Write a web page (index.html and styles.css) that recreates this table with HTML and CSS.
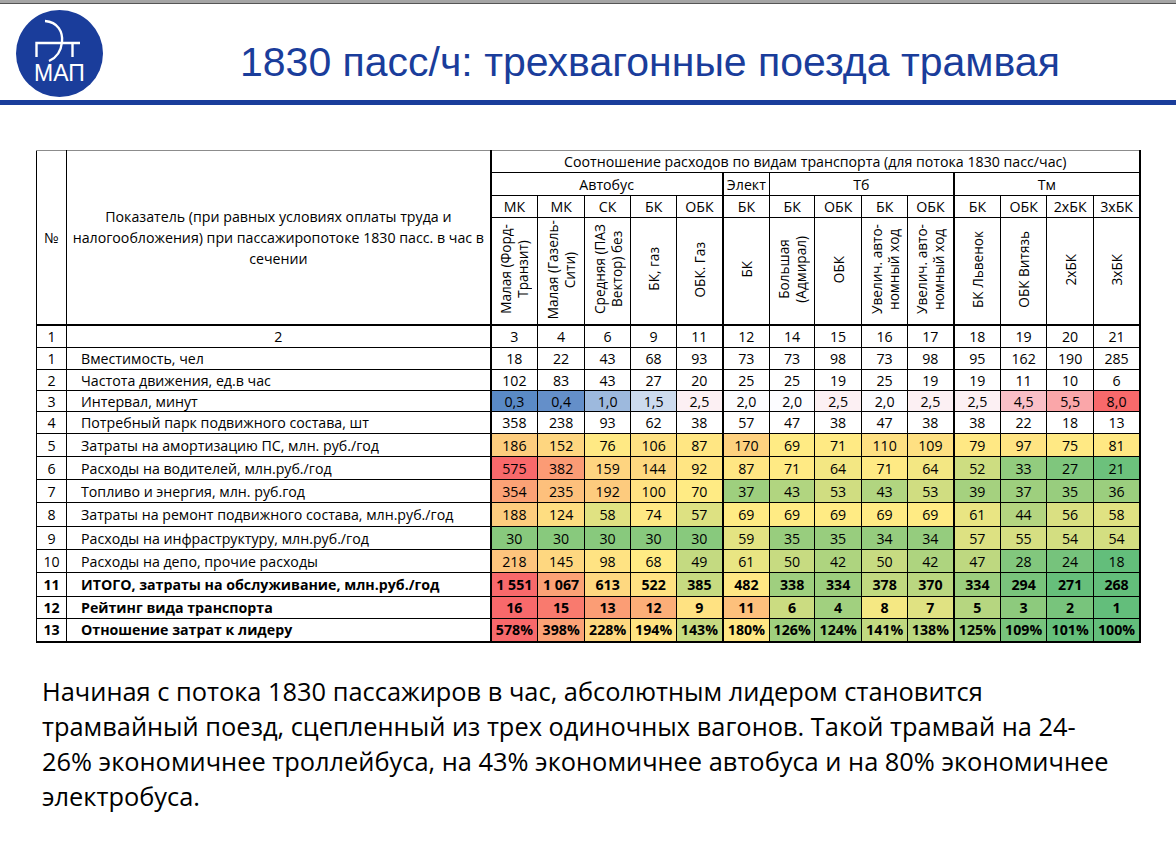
FILE: index.html
```html
<!DOCTYPE html>
<html lang="ru">
<head>
<meta charset="utf-8">
<title>1830 пасс/ч</title>
<link rel="stylesheet" href="styles.css">
</head>
<body>
<div class="frame-top"></div>
<header class="header">
  <svg class="logo" width="87" height="87" viewBox="0 0 87 87">
    <circle cx="43.5" cy="43.5" r="43.5" fill="#1a3d9b"/>
    <g fill="none" stroke="#fff" stroke-width="2.4">
      <path d="M29 11 C42 12 47 22 46 32 C45 42 40 48 33 51"/>
      <path d="M20.5 47 V33 H64"/>
      <path d="M56.5 33 V47"/>
    </g>
    <text x="43.5" y="71" text-anchor="middle" class="logo-text">МАП</text>
  </svg>
  <h1 class="title">1830 пасс/ч: трехвагонные поезда трамвая</h1>
</header>
<div class="rule"></div>

<table class="grid">
  <colgroup>
    <col class="c-no"><col class="c-name">
    <col class="c47"><col class="c47"><col class="c46"><col class="c46"><col class="c46">
    <col class="c47"><col class="c45"><col class="c47"><col class="c46"><col class="c46">
    <col class="c47"><col class="c46"><col class="c47"><col class="c46">
  </colgroup>
  <thead>
    <tr class="h1">
      <th rowspan="4" class="no">№</th>
      <th rowspan="4" class="name-head">Показатель (при равных условиях оплаты труда и налогообложения) при пассажиропотоке 1830 пасс. в час в сечении</th>
      <th colspan="14" class="thick-l thick-r">Соотношение расходов по видам транспорта (для потока 1830 пасс/час)</th>
    </tr>
    <tr class="h2">
      <th colspan="5" class="thick-l">Автобус</th>
      <th class="thick-l">Элект</th>
      <th colspan="4">Тб</th>
      <th colspan="4" class="thick-l thick-r">Тм</th>
    </tr>
    <tr class="h3">
      <th class="thick-l">МК</th><th>МК</th><th>СК</th><th>БК</th><th>ОБК</th>
      <th class="thick-l">БК</th>
      <th>БК</th><th>ОБК</th><th>БК</th><th>ОБК</th>
      <th class="thick-l">БК</th><th>ОБК</th><th>2хБК</th><th class="thick-r">3хБК</th>
    </tr>
    <tr class="h4">
      <th class="thick-l"><span class="rot">Малая (Форд-<br>Транзит)</span></th>
      <th><span class="rot">Малая (Газель-<br>Сити)</span></th>
      <th><span class="rot">Средняя (ПАЗ<br>Вектор) без</span></th>
      <th><span class="rot">БК, газ</span></th>
      <th><span class="rot">ОБК. Газ</span></th>
      <th class="thick-l"><span class="rot">БК</span></th>
      <th><span class="rot">Большая<br>(Адмирал)</span></th>
      <th><span class="rot">ОБК</span></th>
      <th><span class="rot">Увелич. авто-<br>номный ход</span></th>
      <th><span class="rot">Увелич. авто-<br>номный ход</span></th>
      <th class="thick-l"><span class="rot">БК Львенок</span></th>
      <th><span class="rot">ОБК Витязь</span></th>
      <th><span class="rot">2хБК</span></th>
      <th class="thick-r"><span class="rot">3хБК</span></th>
    </tr>
  </thead>
  <tbody>
    <tr class="nums thick-t">
      <td>1</td><td class="center">2</td>
      <td class="thick-l">3</td><td>4</td><td>6</td><td>9</td><td>11</td>
      <td class="thick-l">12</td><td>14</td><td>15</td><td>16</td><td>17</td>
      <td class="thick-l">18</td><td>19</td><td>20</td><td class="thick-r">21</td>
    </tr>
    <tr class="r22">
      <td>1</td><td class="label">Вместимость, чел</td>
      <td class="thick-l">18</td><td>22</td><td>43</td><td>68</td><td>93</td>
      <td class="thick-l">73</td><td>73</td><td>98</td><td>73</td><td>98</td>
      <td class="thick-l">95</td><td>162</td><td>190</td><td class="thick-r">285</td>
    </tr>
    <tr class="r21">
      <td>2</td><td class="label">Частота движения, ед.в час</td>
      <td class="thick-l">102</td><td>83</td><td>43</td><td>27</td><td>20</td>
      <td class="thick-l">25</td><td>25</td><td>19</td><td>25</td><td>19</td>
      <td class="thick-l">19</td><td>11</td><td>10</td><td class="thick-r">6</td>
    </tr>
    <tr class="r21">
      <td>3</td><td class="label">Интервал, минут</td>
      <td class="thick-l" style="background:#5a8ac6">0,3</td>
      <td style="background:#648fc9">0,4</td>
      <td style="background:#9db9dd">1,0</td>
      <td style="background:#cddbee">1,5</td>
      <td style="background:#fcf0f3">2,5</td>
      <td class="thick-l" style="background:#fcfcff">2,0</td>
      <td style="background:#fcfcff">2,0</td>
      <td style="background:#fcf0f3">2,5</td>
      <td style="background:#fcfcff">2,0</td>
      <td style="background:#fcf0f3">2,5</td>
      <td class="thick-l" style="background:#fcf0f3">2,5</td>
      <td style="background:#fabfc7">4,5</td>
      <td style="background:#faa6a9">5,5</td>
      <td class="thick-r" style="background:#f8696b">8,0</td>
    </tr>
    <tr class="r22">
      <td>4</td><td class="label">Потребный парк подвижного состава, шт</td>
      <td class="thick-l">358</td><td>238</td><td>93</td><td>62</td><td>38</td>
      <td class="thick-l">57</td><td>47</td><td>38</td><td>47</td><td>38</td>
      <td class="thick-l">38</td><td>22</td><td>18</td><td class="thick-r">13</td>
    </tr>
    <tr class="r23">
      <td>5</td><td class="label">Затраты на амортизацию ПС, млн. руб./год</td>
      <td class="thick-l" style="background:#fdcd7e">186</td>
      <td style="background:#fed680">152</td>
      <td style="background:#ffe984">76</td>
      <td style="background:#fee182">106</td>
      <td style="background:#ffe683">87</td>
      <td class="thick-l" style="background:#fed17f">170</td>
      <td style="background:#ffeb84">69</td>
      <td style="background:#ffea84">71</td>
      <td style="background:#fee082">110</td>
      <td style="background:#fee082">109</td>
      <td class="thick-l" style="background:#ffe884">79</td>
      <td style="background:#ffe483">97</td>
      <td style="background:#ffe984">75</td>
      <td class="thick-r" style="background:#ffe883">81</td>
    </tr>
    <tr class="r23">
      <td>6</td><td class="label">Расходы на водителей, млн.руб./год</td>
      <td class="thick-l" style="background:#f8696b">575</td>
      <td style="background:#fb9b75">382</td>
      <td style="background:#fed480">159</td>
      <td style="background:#fed880">144</td>
      <td style="background:#ffe583">92</td>
      <td class="thick-l" style="background:#ffe683">87</td>
      <td style="background:#ffea84">71</td>
      <td style="background:#f3e783">64</td>
      <td style="background:#ffea84">71</td>
      <td style="background:#f3e783">64</td>
      <td class="thick-l" style="background:#cddd81">52</td>
      <td style="background:#92cc7e">33</td>
      <td style="background:#7fc67d">27</td>
      <td class="thick-r" style="background:#6cc17c">21</td>
    </tr>
    <tr class="r23">
      <td>7</td><td class="label">Топливо и энергия, млн. руб.год</td>
      <td class="thick-l" style="background:#fba276">354</td>
      <td style="background:#fdc07c">235</td>
      <td style="background:#fdcb7e">192</td>
      <td style="background:#ffe382">100</td>
      <td style="background:#ffeb84">70</td>
      <td class="thick-l" style="background:#9ecf7e">37</td>
      <td style="background:#b1d580">43</td>
      <td style="background:#d0dd81">53</td>
      <td style="background:#b1d580">43</td>
      <td style="background:#d0dd81">53</td>
      <td class="thick-l" style="background:#a5d17f">39</td>
      <td style="background:#9ecf7e">37</td>
      <td style="background:#98cd7e">35</td>
      <td class="thick-r" style="background:#9bce7e">36</td>
    </tr>
    <tr class="r24">
      <td>8</td><td class="label">Затраты на ремонт подвижного состава, млн.руб./год</td>
      <td class="thick-l" style="background:#fdcc7e">188</td>
      <td style="background:#fedd81">124</td>
      <td style="background:#e0e282">58</td>
      <td style="background:#ffe984">74</td>
      <td style="background:#dde182">57</td>
      <td class="thick-l" style="background:#ffeb84">69</td>
      <td style="background:#ffeb84">69</td>
      <td style="background:#ffeb84">69</td>
      <td style="background:#ffeb84">69</td>
      <td style="background:#ffeb84">69</td>
      <td class="thick-l" style="background:#e9e583">61</td>
      <td style="background:#b4d580">44</td>
      <td style="background:#dae082">56</td>
      <td class="thick-r" style="background:#e0e282">58</td>
    </tr>
    <tr class="r23">
      <td>9</td><td class="label">Расходы на инфраструктуру, млн.руб./год</td>
      <td class="thick-l" style="background:#88c97d">30</td>
      <td style="background:#88c97d">30</td>
      <td style="background:#88c97d">30</td>
      <td style="background:#88c97d">30</td>
      <td style="background:#88c97d">30</td>
      <td class="thick-l" style="background:#e3e382">59</td>
      <td style="background:#98cd7e">35</td>
      <td style="background:#98cd7e">35</td>
      <td style="background:#95cc7e">34</td>
      <td style="background:#95cc7e">34</td>
      <td class="thick-l" style="background:#dde182">57</td>
      <td style="background:#d6df82">55</td>
      <td style="background:#d3de81">54</td>
      <td class="thick-r" style="background:#d3de81">54</td>
    </tr>
    <tr class="r23">
      <td>10</td><td class="label">Расходы на депо, прочие расходы</td>
      <td class="thick-l" style="background:#fdc47d">218</td>
      <td style="background:#fed780">145</td>
      <td style="background:#ffe383">98</td>
      <td style="background:#ffeb84">68</td>
      <td style="background:#c4da81">49</td>
      <td class="thick-l" style="background:#e9e583">61</td>
      <td style="background:#c7db81">50</td>
      <td style="background:#aed47f">42</td>
      <td style="background:#c7db81">50</td>
      <td style="background:#aed47f">42</td>
      <td class="thick-l" style="background:#bed880">47</td>
      <td style="background:#82c77d">28</td>
      <td style="background:#76c37c">24</td>
      <td class="thick-r" style="background:#63be7b">18</td>
    </tr>
    <tr class="r24 bold">
      <td>11</td><td class="label">ИТОГО, затраты на обслуживание, млн.руб./год</td>
      <td class="thick-l" style="background:#f8696b">1 551</td>
      <td style="background:#fba276">1 067</td>
      <td style="background:#fed880">613</td>
      <td style="background:#ffe282">522</td>
      <td style="background:#c7db81">385</td>
      <td class="thick-l" style="background:#ffe784">482</td>
      <td style="background:#9fcf7f">338</td>
      <td style="background:#9cce7e">334</td>
      <td style="background:#c1d980">378</td>
      <td style="background:#bad780">370</td>
      <td class="thick-l" style="background:#9cce7e">334</td>
      <td style="background:#79c47c">294</td>
      <td style="background:#66bf7b">271</td>
      <td class="thick-r" style="background:#63be7b">268</td>
    </tr>
    <tr class="r22 bold">
      <td>12</td><td class="label">Рейтинг вида транспорта</td>
      <td class="thick-l" style="background:#f8696b">16</td>
      <td style="background:#f97a6e">15</td>
      <td style="background:#fb9d75">13</td>
      <td style="background:#fcae78">12</td>
      <td style="background:#ffe282">9</td>
      <td class="thick-l" style="background:#fdc07c">11</td>
      <td style="background:#cbdc81">6</td>
      <td style="background:#a1d07f">4</td>
      <td style="background:#f5e883">8</td>
      <td style="background:#e0e282">7</td>
      <td class="thick-l" style="background:#b6d680">5</td>
      <td style="background:#8dca7d">3</td>
      <td style="background:#78c47c">2</td>
      <td class="thick-r" style="background:#63be7b">1</td>
    </tr>
    <tr class="r23 bold last">
      <td>13</td><td class="label">Отношение затрат к лидеру</td>
      <td class="thick-l" style="background:#f8696b">578%</td>
      <td style="background:#fba276">398%</td>
      <td style="background:#fed880">228%</td>
      <td style="background:#ffe382">194%</td>
      <td style="background:#c6da81">143%</td>
      <td class="thick-l" style="background:#ffe784">180%</td>
      <td style="background:#9fcf7e">126%</td>
      <td style="background:#9ace7e">124%</td>
      <td style="background:#c1d980">141%</td>
      <td style="background:#bad780">138%</td>
      <td class="thick-l" style="background:#9ccf7e">125%</td>
      <td style="background:#78c47c">109%</td>
      <td style="background:#65bf7b">101%</td>
      <td class="thick-r" style="background:#63be7b">100%</td>
    </tr>
  </tbody>
</table>

<p class="summary">Начиная с потока 1830 пассажиров в час, абсолютным лидером становится<br>трамвайный поезд, сцепленный из трех одиночных вагонов. Такой трамвай на 24-<br>26% экономичнее троллейбуса, на 43% экономичнее автобуса и на 80% экономичнее<br>электробуса.</p>
</body>
</html>
```

FILE: styles.css
```css
html, body {
  margin: 0;
  padding: 0;
  background: #ffffff;
}

body {
  font-family: "Open Sans", "Lato", sans-serif;
  color: #000;
}

.frame-top {
  height: 3px;
  background: #a5a5a5;
  border-bottom: 1px solid #555;
}

.header {
  display: flex;
  align-items: flex-start;
  height: 96px;
  padding-left: 16px;
}

.logo {
  margin-top: 6px;
  flex: none;
}

.logo-text {
  font-family: "Liberation Sans", Arial, sans-serif;
  font-size: 23px;
  fill: #fff;
}

.title {
  margin: 0 0 0 137px;
  padding-top: 35px;
  font-family: "Liberation Sans", Arial, sans-serif;
  font-weight: normal;
  font-size: 41px;
  line-height: 46px;
  color: #1a3d9b;
  white-space: nowrap;
}

.rule {
  height: 5px;
  background: #1a3d9b;
}

.grid {
  margin: 45px 0 0 36px;
  width: 1105px;
  table-layout: fixed;
  border-collapse: collapse;
  font-size: 14.2px;
  line-height: 17px;
}

.c-no { width: 30px; }
.c-name { width: 424px; }
.c45 { width: 45px; }
.c46 { width: 46px; }
.c47 { width: 47px; }

.grid th,
.grid td {
  border: 1px solid #000;
  padding: 0;
  text-align: center;
  vertical-align: middle;
  font-weight: normal;
  overflow: hidden;
  white-space: nowrap;
}

.grid thead tr:first-child th {
  border-top-color: #8c8c8c;
}

.grid th.name-head {
  white-space: normal;
  line-height: 21px;
  padding: 0 2px;
}

.grid .thick-l { border-left: 2px solid #000; }
.grid .thick-r { border-right: 2px solid #000; }
.grid tr.thick-t td { border-top: 2px solid #000; }
.grid tr.last td { border-bottom: 2px solid #000; }

.h1 { height: 22px; }
.h2 { height: 23px; }
.h3 { height: 22px; }
.h4 { height: 107px; }
.nums { height: 23px; }
.r21 { height: 21px; }
.r22 { height: 22px; }
.r23 { height: 23px; }
.r24 { height: 24px; }

.rot {
  display: inline-block;
  writing-mode: vertical-rl;
  transform: rotate(180deg);
  white-space: nowrap;
  text-align: center;
  font-size: 13.6px;
  line-height: 17px;
}

.grid td.label {
  text-align: left;
  padding-left: 14px;
}

.grid tr.bold td {
  font-weight: bold;
}

.summary {
  margin: 31px 0 0 42px;
  font-size: 25.4px;
  line-height: 35px;
  white-space: nowrap;
}
```
